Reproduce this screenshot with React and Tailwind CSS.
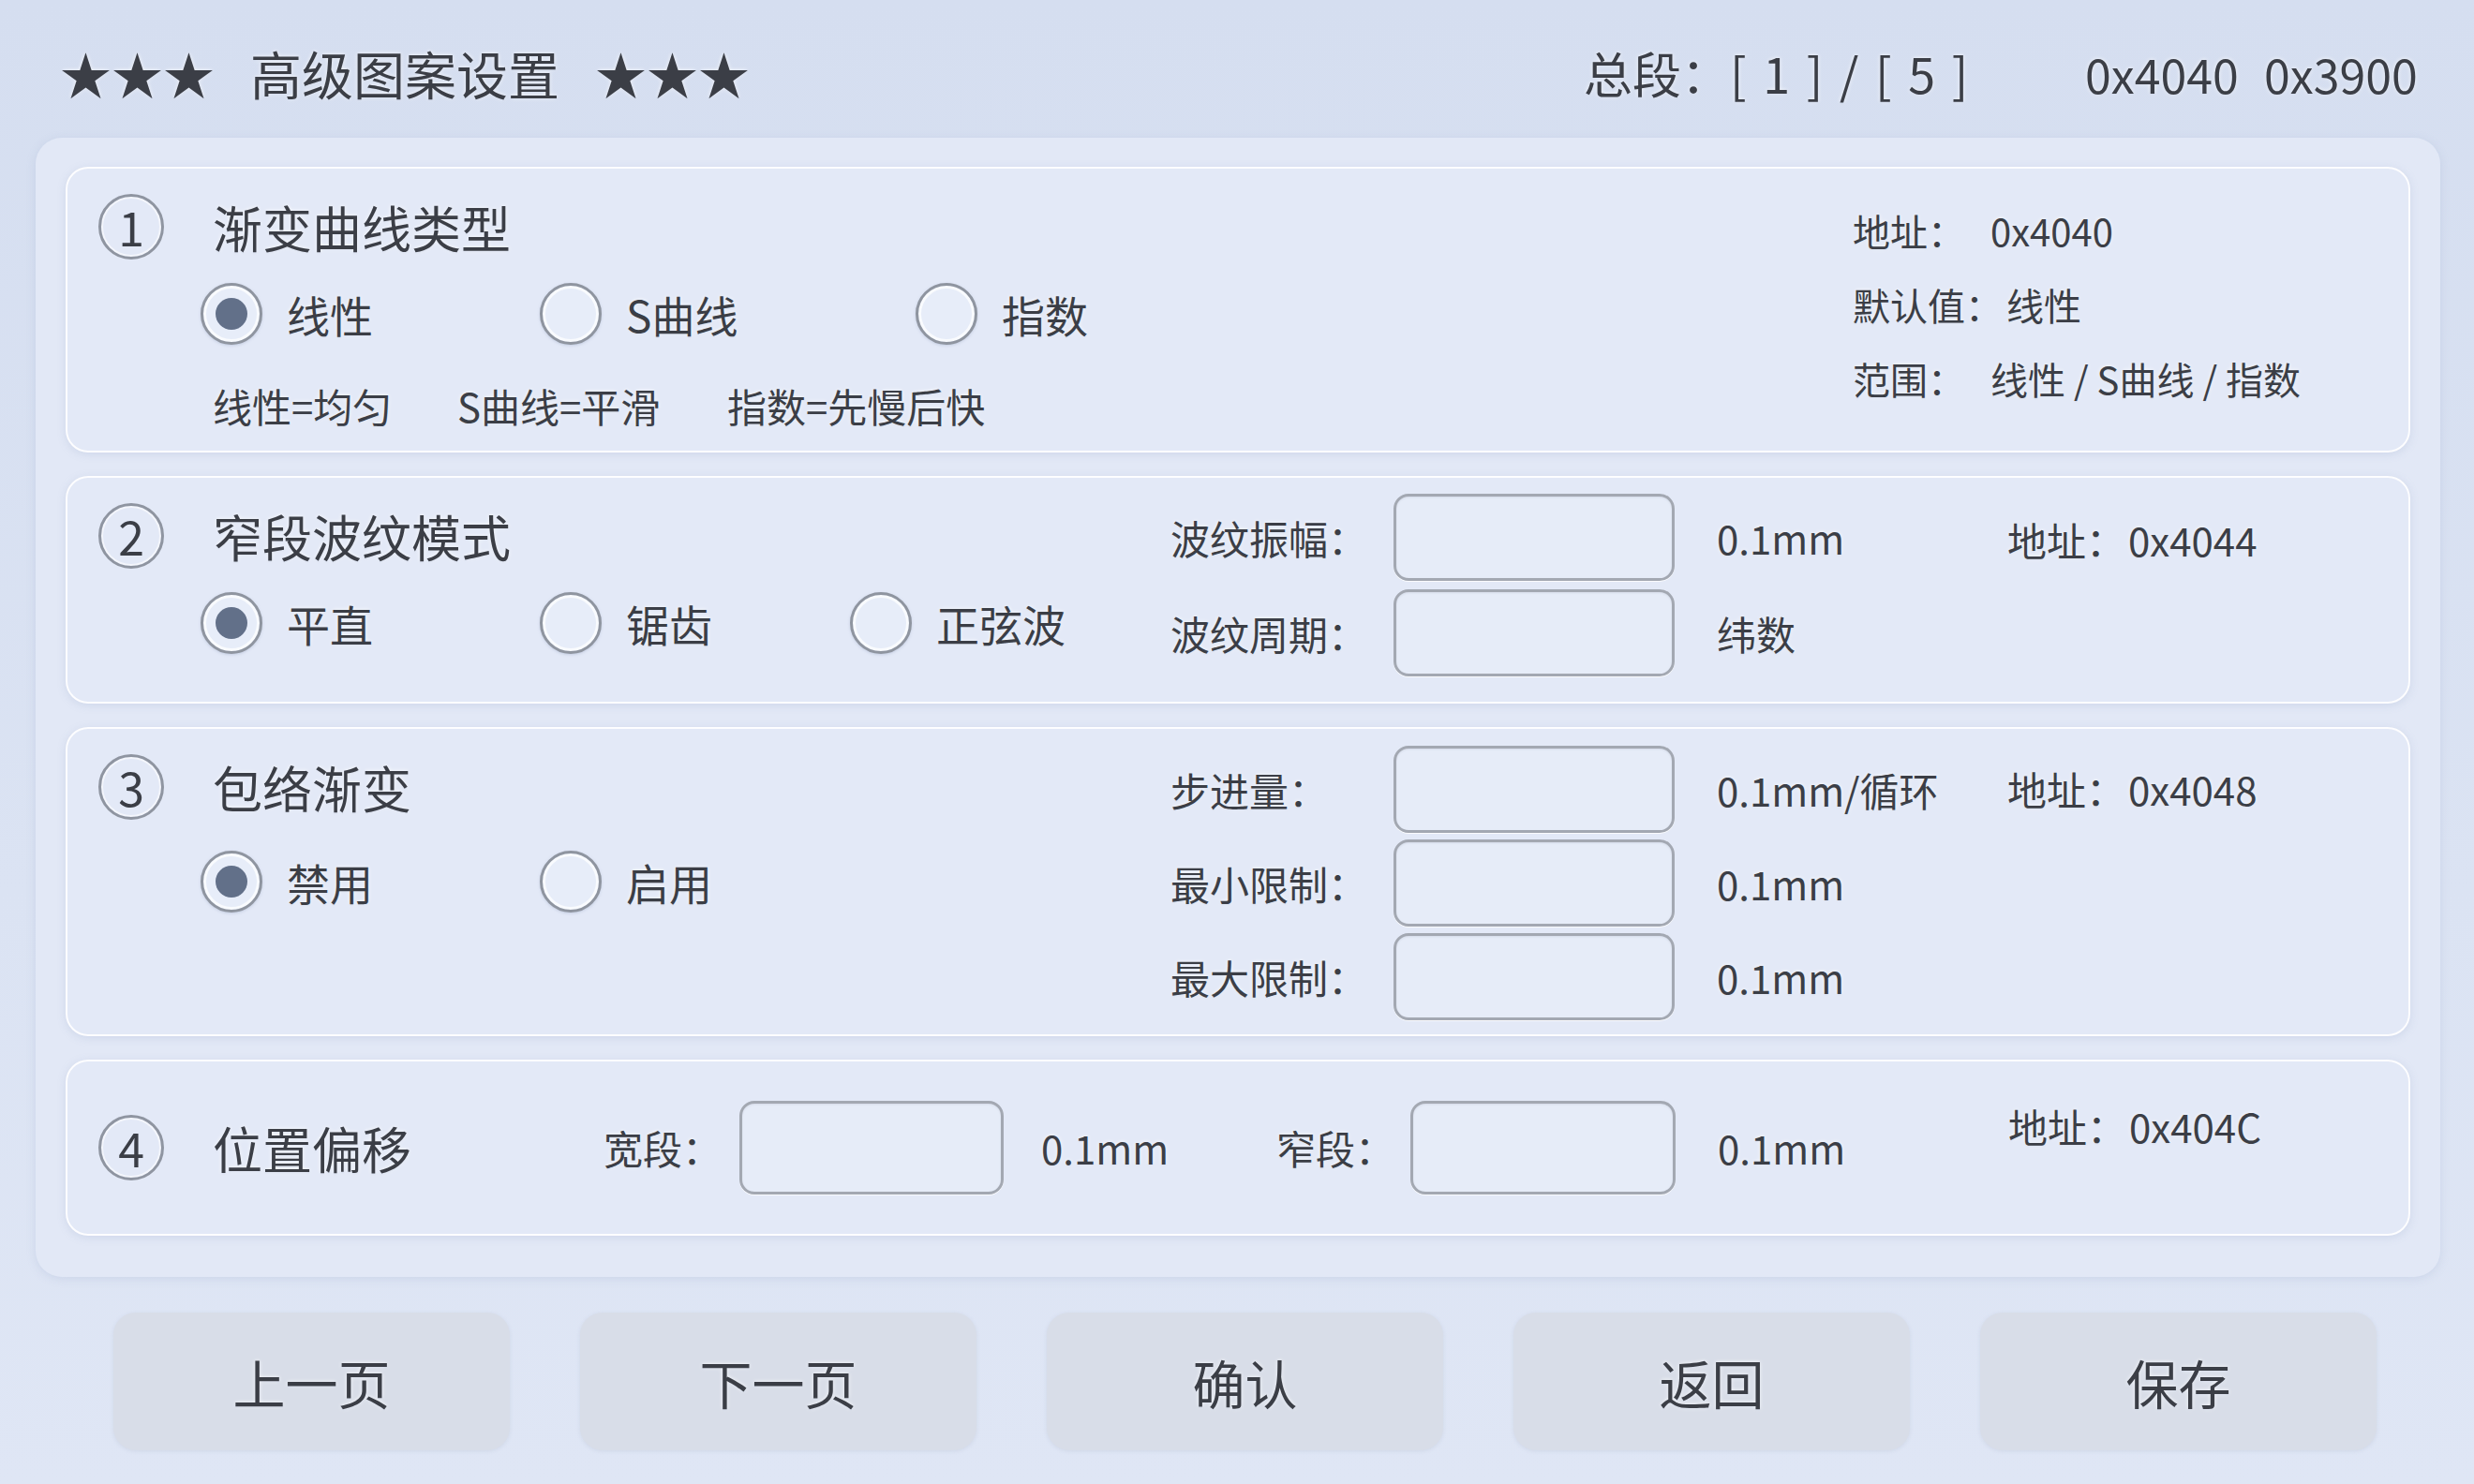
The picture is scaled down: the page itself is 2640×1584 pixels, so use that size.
import React from "react";

const glow = "[text-shadow:0_0_4px_rgba(255,255,255,0.95),0_1px_2px_rgba(150,170,210,0.35)]";

function Radio({ checked }) {
  return (
    <span className="w-[66px] h-[66px] rounded-full border-[3px] border-[#8f95a0] bg-[#e7edf9] shadow-[inset_0_0_0_3px_rgba(255,255,255,0.75),0_1px_3px_rgba(140,155,185,0.35)] flex items-center justify-center shrink-0">
      {checked && <span className="w-[34px] h-[34px] rounded-full bg-[#627089]" />}
    </span>
  );
}

function Option({ checked, label, w }) {
  return (
    <div className={`flex items-center gap-[26px] shrink-0 ${w}`}>
      <Radio checked={checked} />
      <span className={`text-[46px] leading-none whitespace-nowrap ${glow}`}>{label}</span>
    </div>
  );
}

function Num({ n }) {
  return (
    <span className="w-[70px] h-[70px] rounded-full border-[3px] border-[#8f95a1] shadow-[inset_0_0_0_2px_rgba(255,255,255,0.6)] flex items-center justify-center text-[50px] leading-none shrink-0 pb-[2px]">
      {n}
    </span>
  );
}

function Field({ w = "w-[300px]", h = "h-[93px]" }) {
  return (
    <div className={`${w} ${h} shrink-0 rounded-[16px] border-[3px] border-[#a3a8b2] bg-[#e6ecf8] shadow-[inset_0_1px_2px_rgba(90,100,120,0.12),0_1px_0_rgba(255,255,255,0.8)]`} />
  );
}

function FieldRow({ label, unit }) {
  return (
    <div className="flex items-center h-[93px]">
      <span className={`w-[238px] shrink-0 text-[42px] leading-none whitespace-nowrap ${glow}`}>{label}</span>
      <Field />
      <span className={`ml-[45px] text-[42px] leading-none whitespace-nowrap ${glow}`}>{unit}</span>
    </div>
  );
}

function Heading({ n, title }) {
  return (
    <div className="flex items-center gap-[52px] h-[70px]">
      <Num n={n} />
      <span className={`text-[53px] leading-none whitespace-nowrap ${glow}`}>{title}</span>
    </div>
  );
}

function Addr({ value }) {
  return (
    <div className={`h-[40px] flex items-center text-[42px] leading-none whitespace-nowrap ${glow}`}>
      <span className="w-[129px] shrink-0">地址：</span>
      <span>{value}</span>
    </div>
  );
}

const card =
  "w-[2502px] shrink-0 rounded-[24px] border-2 border-[rgba(255,255,255,0.9)] bg-[#e3e9f7] shadow-[0_2px_8px_rgba(150,168,205,0.25)]";

export default function App() {
  return (
    <div className="w-[2640px] h-[1584px] overflow-hidden bg-[linear-gradient(180deg,#d5def0_0%,#dbe3f3_60%,#dfe6f5_100%)] text-[#3b3e46] font-['Noto_Sans_CJK_SC','Noto_Sans',sans-serif]">
      {/* Header */}
      <div className="h-[147px] flex items-center pt-[8px]">
        <div className={`w-[1690px] shrink-0 pl-[64px] flex items-center gap-[38px] text-[55px] leading-none ${glow}`}>
          <span>★★★</span>
          <span>高级图案设置</span>
          <span>★★★</span>
        </div>
        <span className={`w-[535px] shrink-0 text-[52px] leading-none whitespace-nowrap ${glow}`}>
          总段：<span className="tracking-[3px]">[ 1 ] / [ 5 ]</span>
        </span>
        <span className={`w-[191px] shrink-0 text-[50px] leading-none ${glow}`}>0x4040</span>
        <span className={`text-[50px] leading-none ${glow}`}>0x3900</span>
      </div>

      {/* Main panel */}
      <div className="ml-[38px] w-[2566px] h-[1216px] rounded-[28px] bg-[#e2e8f6] shadow-[0_2px_10px_rgba(150,168,205,0.25)] pt-[31px] px-[32px] flex flex-col gap-[25px]">
        {/* Card 1 */}
        <div className={`${card} h-[305px] flex`}>
          <div className="flex-1 pl-[33px] pt-[27px] flex flex-col">
            <Heading n="1" title="渐变曲线类型" />
            <div className="flex items-center h-[66px] mt-[25px] pl-[109px]">
              <Option checked label="线性" w="w-[362px]" />
              <Option label="S曲线" w="w-[401px]" />
              <Option label="指数" w="" />
            </div>
            <div className={`flex items-center h-[40px] mt-[45px] pl-[122px] text-[42px] leading-none whitespace-nowrap ${glow}`}>
              <span className="w-[261px] shrink-0">线性=均匀</span>
              <span className="w-[288px] shrink-0">S曲线=平滑</span>
              <span>指数=先慢后快</span>
            </div>
          </div>
          <div className={`w-[593px] shrink-0 pt-[46px] flex flex-col gap-[39px] text-[40px] leading-none whitespace-nowrap ${glow}`}>
            <div className="h-[40px] flex items-center">
              <span className="w-[147px] shrink-0">地址：</span>
              <span>0x4040</span>
            </div>
            <div className="h-[40px] flex items-center">
              <span className="w-[164px] shrink-0">默认值：</span>
              <span>线性</span>
            </div>
            <div className="h-[40px] flex items-center">
              <span className="w-[147px] shrink-0">范围：</span>
              <span>线性 / S曲线 / 指数</span>
            </div>
          </div>
        </div>

        {/* Card 2 */}
        <div className={`${card} h-[243px] flex`}>
          <div className="w-[1177px] shrink-0 pl-[33px] pt-[27px] flex flex-col">
            <Heading n="2" title="窄段波纹模式" />
            <div className="flex items-center h-[66px] mt-[25px] pl-[109px]">
              <Option checked label="平直" w="w-[362px]" />
              <Option label="锯齿" w="w-[331px]" />
              <Option label="正弦波" w="" />
            </div>
          </div>
          <div className="w-[893px] shrink-0 pt-[17px] flex flex-col gap-[9px]">
            <FieldRow label="波纹振幅：" unit="0.1mm" />
            <FieldRow label="波纹周期：" unit="纬数" />
          </div>
          <div className="flex-1 pt-[46px]">
            <Addr value="0x4044" />
          </div>
        </div>

        {/* Card 3 */}
        <div className={`${card} h-[330px] flex`}>
          <div className="w-[1177px] shrink-0 pl-[33px] pt-[27px] flex flex-col">
            <Heading n="3" title="包络渐变" />
            <div className="flex items-center h-[66px] mt-[33px] pl-[109px]">
              <Option checked label="禁用" w="w-[362px]" />
              <Option label="启用" w="" />
            </div>
          </div>
          <div className="w-[893px] shrink-0 pt-[18px] flex flex-col gap-[7px]">
            <FieldRow label="步进量：" unit="0.1mm/循环" />
            <FieldRow label="最小限制：" unit="0.1mm" />
            <FieldRow label="最大限制：" unit="0.1mm" />
          </div>
          <div className="flex-1 pt-[44px]">
            <Addr value="0x4048" />
          </div>
        </div>

        {/* Card 4 */}
        <div className={`${card} h-[188px] flex items-center pl-[33px]`}>
          <Num n="4" />
          <span className={`ml-[52px] w-[417px] shrink-0 text-[53px] leading-none whitespace-nowrap ${glow}`}>位置偏移</span>
          <span className={`w-[145px] shrink-0 text-[42px] leading-none whitespace-nowrap ${glow}`}>宽段：</span>
          <Field w="w-[282px]" h="h-[100px]" />
          <span className={`w-[291px] shrink-0 pl-[40px] text-[42px] leading-none whitespace-nowrap ${glow}`}>0.1mm</span>
          <span className={`w-[143px] shrink-0 text-[42px] leading-none whitespace-nowrap ${glow}`}>窄段：</span>
          <Field w="w-[283px]" h="h-[100px]" />
          <span className={`w-[355px] shrink-0 pl-[45px] text-[42px] leading-none whitespace-nowrap ${glow}`}>0.1mm</span>
          <div className="self-start mt-[49px]">
            <Addr value="0x404C" />
          </div>
        </div>
      </div>

      {/* Buttons */}
      <div className="mt-[38px] pl-[121px] flex gap-[75px]">
        {["上一页", "下一页", "确认", "返回", "保存"].map((t) => (
          <div
            key={t}
            className={`w-[423px] h-[147px] shrink-0 rounded-[24px] bg-[#d8dde8] shadow-[0_1px_4px_rgba(150,160,185,0.2)] flex items-center justify-center text-[56px] leading-none ${glow}`}
          >
            {t}
          </div>
        ))}
      </div>
    </div>
  );
}
